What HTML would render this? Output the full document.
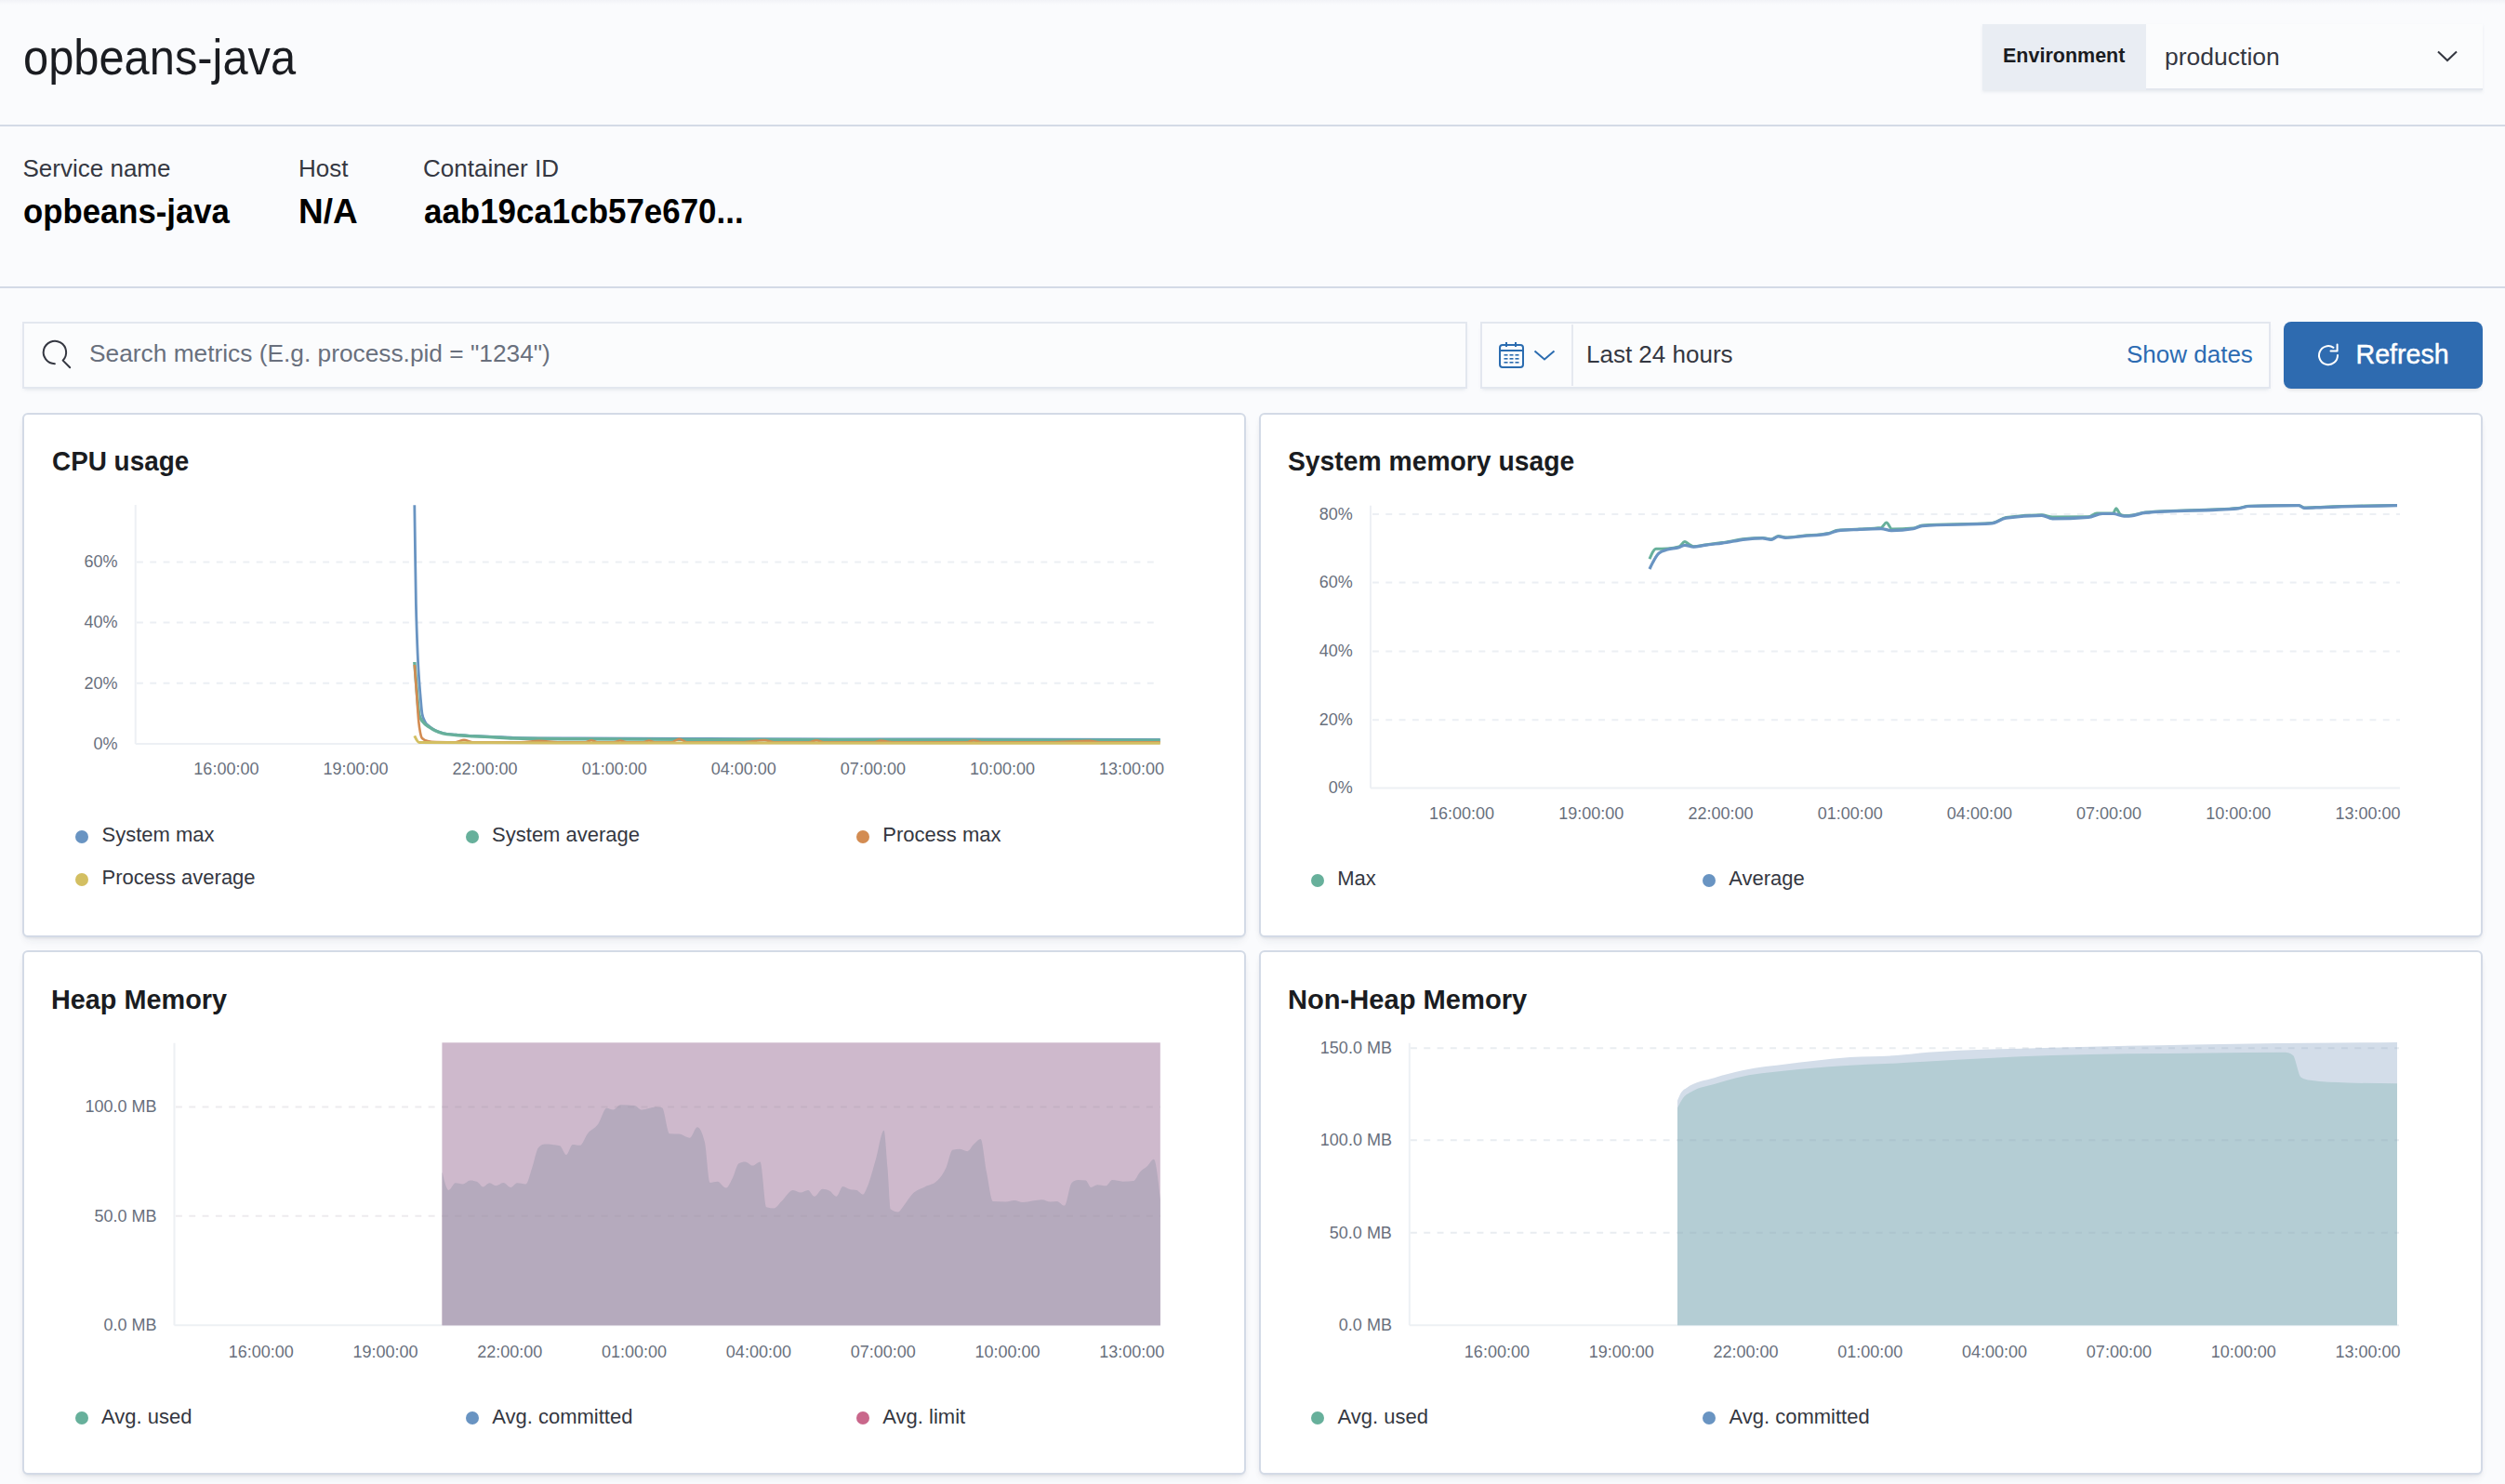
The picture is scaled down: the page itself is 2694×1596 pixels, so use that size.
<!DOCTYPE html>
<html><head><meta charset="utf-8"><title>opbeans-java</title>
<style>
html,body{margin:0;padding:0;}
body{width:2694px;height:1596px;position:relative;overflow:hidden;background:#FAFBFD;font-family:"Liberation Sans",sans-serif;color:#343741;}
.t{position:absolute;white-space:nowrap;line-height:1;}
svg{position:absolute;left:0;top:0;}
svg text{font-family:"Liberation Sans",sans-serif;}
</style></head>
<body>
<div style="position:absolute;left:0px;top:0px;width:2694px;height:134px;background:linear-gradient(#F2F3F7,#FAFBFD 5px);"></div>
<div style="position:absolute;left:0px;top:134px;width:2694px;height:2px;background:#D3DAE6;"></div>
<div style="position:absolute;left:0px;top:308px;width:2694px;height:2px;background:#D3DAE6;"></div>
<div class="t" style="left:25.00px;top:34.39px;font-size:54px;font-weight:400;color:#1A1C21;transform:scaleX(0.9040);transform-origin:0 0;">opbeans-java</div>
<div style="position:absolute;left:2132px;top:26px;width:538px;height:71px;background:#FBFCFD;box-shadow:0 2px 3px rgba(152,162,179,0.18);"></div>
<div style="position:absolute;left:2132px;top:26px;width:176px;height:71px;background:#E9EDF3;"></div>
<div style="position:absolute;left:2308px;top:95px;width:362px;height:2px;background:#E3E7EE;"></div>
<div class="t" style="left:2154.00px;top:50.30px;font-size:21.5px;font-weight:700;color:#1A1C21;">Environment</div>
<div class="t" style="left:2328.00px;top:48.07px;font-size:26.5px;font-weight:400;color:#343741;">production</div>
<div class="t" style="left:24.50px;top:168.19px;font-size:26px;font-weight:400;color:#343741;">Service name</div>
<div class="t" style="left:321.00px;top:168.19px;font-size:26px;font-weight:400;color:#343741;">Host</div>
<div class="t" style="left:455.00px;top:168.19px;font-size:26px;font-weight:400;color:#343741;">Container ID</div>
<div class="t" style="left:24.50px;top:208.76px;font-size:37.5px;font-weight:700;color:#000000;transform:scaleX(0.9260);transform-origin:0 0;">opbeans-java</div>
<div class="t" style="left:320.50px;top:208.76px;font-size:37.5px;font-weight:700;color:#000000;transform:scaleX(0.9850);transform-origin:0 0;">N/A</div>
<div class="t" style="left:455.50px;top:208.76px;font-size:37.5px;font-weight:700;color:#000000;transform:scaleX(0.9310);transform-origin:0 0;">aab19ca1cb57e670...</div>
<div style="position:absolute;left:24px;top:346px;width:1554px;height:72px;background:#FBFCFD;border:2px solid #E3E7EF;box-sizing:border-box;box-shadow:0 3px 4px -2px rgba(152,162,179,0.25);"></div>
<div class="t" style="left:96.00px;top:367.34px;font-size:26.3px;font-weight:400;color:#69707D;">Search metrics (E.g. process.pid = "1234")</div>
<div style="position:absolute;left:1592px;top:346px;width:850px;height:72px;background:#FBFCFD;border:2px solid #E3E7EF;box-sizing:border-box;box-shadow:0 3px 4px -2px rgba(152,162,179,0.25);"></div>
<div style="position:absolute;left:1690px;top:349px;width:2px;height:66px;background:#E6E9F0;"></div>
<div class="t" style="left:1706.00px;top:367.69px;font-size:26px;font-weight:400;color:#343741;">Last 24 hours</div>
<div class="t" style="left:2287.00px;top:367.59px;font-size:26px;font-weight:400;color:#2C6BB2;">Show dates</div>
<div style="position:absolute;left:2456px;top:346px;width:214px;height:72px;background:#2E6BB0;border-radius:8px;box-shadow:0 3px 4px -2px rgba(0,0,0,0.15);"></div>
<div class="t" style="left:2533.50px;top:366.79px;font-size:28.6px;font-weight:400;color:#FFFFFF;-webkit-text-stroke:0.45px #FFFFFF;">Refresh</div>
<div style="position:absolute;left:24px;top:444px;width:1316px;height:564px;background:#FFFFFF;border:2px solid #D3DAE6;box-sizing:border-box;border-radius:6px;box-shadow:0 2px 3px -1px rgba(60,66,90,0.10),0 4px 8px -2px rgba(60,66,90,0.06),0 8px 14px -4px rgba(60,66,90,0.04);"></div>
<div style="position:absolute;left:1354px;top:444px;width:1316px;height:564px;background:#FFFFFF;border:2px solid #D3DAE6;box-sizing:border-box;border-radius:6px;box-shadow:0 2px 3px -1px rgba(60,66,90,0.10),0 4px 8px -2px rgba(60,66,90,0.06),0 8px 14px -4px rgba(60,66,90,0.04);"></div>
<div style="position:absolute;left:24px;top:1022px;width:1316px;height:564px;background:#FFFFFF;border:2px solid #D3DAE6;box-sizing:border-box;border-radius:6px;box-shadow:0 2px 3px -1px rgba(60,66,90,0.10),0 4px 8px -2px rgba(60,66,90,0.06),0 8px 14px -4px rgba(60,66,90,0.04);"></div>
<div style="position:absolute;left:1354px;top:1022px;width:1316px;height:564px;background:#FFFFFF;border:2px solid #D3DAE6;box-sizing:border-box;border-radius:6px;box-shadow:0 2px 3px -1px rgba(60,66,90,0.10),0 4px 8px -2px rgba(60,66,90,0.06),0 8px 14px -4px rgba(60,66,90,0.04);"></div>
<div class="t" style="left:55.50px;top:480.73px;font-size:29.5px;font-weight:700;color:#1A1C21;transform:scaleX(0.9450);transform-origin:0 0;">CPU usage</div>
<div class="t" style="left:1384.50px;top:480.73px;font-size:29.5px;font-weight:700;color:#1A1C21;transform:scaleX(0.9590);transform-origin:0 0;">System memory usage</div>
<div class="t" style="left:55.00px;top:1060.03px;font-size:29.5px;font-weight:700;color:#1A1C21;transform:scaleX(0.9770);transform-origin:0 0;">Heap Memory</div>
<div class="t" style="left:1384.50px;top:1060.03px;font-size:29.5px;font-weight:700;color:#1A1C21;transform:scaleX(0.9870);transform-origin:0 0;">Non-Heap Memory</div>
<div style="position:absolute;left:81px;top:893px;width:14px;height:14px;border-radius:50%;background:#6994C2;"></div>
<div class="t" style="left:109.50px;top:887.38px;font-size:22px;font-weight:400;color:#343741;">System max</div>
<div style="position:absolute;left:500.6px;top:893px;width:14px;height:14px;border-radius:50%;background:#67B09B;"></div>
<div class="t" style="left:529.10px;top:887.38px;font-size:22px;font-weight:400;color:#343741;">System average</div>
<div style="position:absolute;left:920.8px;top:893px;width:14px;height:14px;border-radius:50%;background:#D38C52;"></div>
<div class="t" style="left:949.30px;top:887.38px;font-size:22px;font-weight:400;color:#343741;">Process max</div>
<div style="position:absolute;left:81px;top:939px;width:14px;height:14px;border-radius:50%;background:#D3BF62;"></div>
<div class="t" style="left:109.50px;top:933.38px;font-size:22px;font-weight:400;color:#343741;">Process average</div>
<div style="position:absolute;left:1409.8px;top:939.8px;width:14px;height:14px;border-radius:50%;background:#67B09B;"></div>
<div class="t" style="left:1438.30px;top:934.18px;font-size:22px;font-weight:400;color:#343741;">Max</div>
<div style="position:absolute;left:1830.7px;top:939.8px;width:14px;height:14px;border-radius:50%;background:#6994C2;"></div>
<div class="t" style="left:1859.20px;top:934.18px;font-size:22px;font-weight:400;color:#343741;">Average</div>
<div style="position:absolute;left:80.6px;top:1518.4px;width:14px;height:14px;border-radius:50%;background:#67B09B;"></div>
<div class="t" style="left:109.10px;top:1512.78px;font-size:22px;font-weight:400;color:#343741;">Avg. used</div>
<div style="position:absolute;left:500.7px;top:1518.4px;width:14px;height:14px;border-radius:50%;background:#6994C2;"></div>
<div class="t" style="left:529.20px;top:1512.78px;font-size:22px;font-weight:400;color:#343741;">Avg. committed</div>
<div style="position:absolute;left:920.8px;top:1518.4px;width:14px;height:14px;border-radius:50%;background:#C9678B;"></div>
<div class="t" style="left:949.30px;top:1512.78px;font-size:22px;font-weight:400;color:#343741;">Avg. limit</div>
<div style="position:absolute;left:1410px;top:1518.4px;width:14px;height:14px;border-radius:50%;background:#67B09B;"></div>
<div class="t" style="left:1438.50px;top:1512.78px;font-size:22px;font-weight:400;color:#343741;">Avg. used</div>
<div style="position:absolute;left:1831px;top:1518.4px;width:14px;height:14px;border-radius:50%;background:#6994C2;"></div>
<div class="t" style="left:1859.50px;top:1512.78px;font-size:22px;font-weight:400;color:#343741;">Avg. committed</div>
<svg width="2694" height="1596" viewBox="0 0 2694 1596">
<line x1="145.7" y1="543" x2="145.7" y2="800" stroke="#EDF0F4" stroke-width="2"/>
<line x1="145.7" y1="800" x2="1248" y2="800" stroke="#EDF0F4" stroke-width="2"/>
<line x1="147" y1="604.4" x2="1248" y2="604.4" stroke="#ECEFF4" stroke-width="2" stroke-dasharray="6.9 7.4"/>
<text x="126.6" y="610.2" text-anchor="end" font-size="18" fill="#69707D">60%</text>
<line x1="147" y1="669.6" x2="1248" y2="669.6" stroke="#ECEFF4" stroke-width="2" stroke-dasharray="6.9 7.4"/>
<text x="126.6" y="675.4" text-anchor="end" font-size="18" fill="#69707D">40%</text>
<line x1="147" y1="734.8" x2="1248" y2="734.8" stroke="#ECEFF4" stroke-width="2" stroke-dasharray="6.9 7.4"/>
<text x="126.6" y="740.6" text-anchor="end" font-size="18" fill="#69707D">20%</text>
<text x="126.6" y="805.8" text-anchor="end" font-size="18" fill="#69707D">0%</text>
<text x="243.4" y="833.4" text-anchor="middle" font-size="18" fill="#69707D">16:00:00</text>
<text x="382.5" y="833.4" text-anchor="middle" font-size="18" fill="#69707D">19:00:00</text>
<text x="521.6" y="833.4" text-anchor="middle" font-size="18" fill="#69707D">22:00:00</text>
<text x="660.7" y="833.4" text-anchor="middle" font-size="18" fill="#69707D">01:00:00</text>
<text x="799.8" y="833.4" text-anchor="middle" font-size="18" fill="#69707D">04:00:00</text>
<text x="938.9" y="833.4" text-anchor="middle" font-size="18" fill="#69707D">07:00:00</text>
<text x="1078.0" y="833.4" text-anchor="middle" font-size="18" fill="#69707D">10:00:00</text>
<text x="1217.1" y="833.4" text-anchor="middle" font-size="18" fill="#69707D">13:00:00</text>
<path d="M445.8,543.2 C446.1,562.7 446.3,582.2 446.6,600.0 C446.9,617.8 447.1,636.9 447.4,650.0 C447.7,664.8 448.0,671.9 448.3,681.0 C448.9,698.3 449.4,709.5 450.0,720.0 C450.7,732.4 451.3,739.0 452.0,747.0 C452.7,755.0 453.3,764.0 454.0,767.7 C455.0,773.2 456.0,773.9 457.0,776.0 C458.5,779.2 460.0,779.6 461.5,781.0 C463.7,783.0 465.8,784.3 468.0,785.5 C470.9,787.1 473.7,787.8 476.6,788.5 C481.1,789.6 485.5,789.7 490.0,790.2 C495.0,790.7 500.0,791.0 505.0,791.3 C513.3,791.8 521.7,791.9 530.0,792.3 C537.3,792.6 544.7,793.1 552.0,793.3 C574.7,793.8 597.3,793.8 620.0,794.0 C680.0,794.4 740.0,794.4 800.0,794.6 C866.7,794.8 933.3,794.9 1000.0,795.0 C1082.6,795.1 1165.1,795.2 1247.7,795.3" fill="none" stroke="#6994C2" stroke-width="2.8" stroke-linejoin="round"/>
<path d="M445.8,712.0 C446.5,721.8 447.3,731.6 448.0,740.0 C449.0,751.5 450.0,766.2 451.0,769.6 C452.3,774.2 453.7,774.7 455.0,776.5 C457.2,779.5 459.3,780.4 461.5,781.9 C463.7,783.4 465.8,784.7 468.0,785.8 C470.9,787.2 473.7,788.1 476.6,788.8 C481.1,789.9 485.5,790.0 490.0,790.5 C495.0,791.0 500.0,791.3 505.0,791.6 C513.3,792.1 521.7,792.4 530.0,792.8 C537.3,793.2 544.7,793.8 552.0,794.0 C574.7,794.5 597.3,794.6 620.0,794.8 C680.0,795.3 740.0,795.3 800.0,795.5 C866.7,795.7 933.3,795.9 1000.0,796.0 C1082.6,796.2 1165.1,796.2 1247.7,796.3" fill="none" stroke="#67B09B" stroke-width="3.4" stroke-linejoin="round"/>
<path d="M445.8,715.0 C446.5,725.0 447.3,735.0 448.0,745.0 C448.7,755.0 449.5,767.9 450.2,775.3 C450.8,781.3 451.4,784.9 452.0,788.0 C452.7,791.4 453.3,793.3 454.0,794.0 C456.0,796.0 458.0,796.6 460.0,797.0 C463.0,797.7 466.0,797.9 469.0,798.0 C476.0,798.1 483.0,798.2 490.0,798.2 C493.0,798.2 496.0,795.8 499.0,795.8 C502.0,795.8 505.0,798.2 508.0,798.2 C525.3,798.2 542.7,798.2 560.0,798.2 C566.7,798.2 573.3,796.8 580.0,796.8 C586.7,796.8 593.3,798.2 600.0,798.2 C610.0,798.2 620.0,798.2 630.0,798.2 C632.0,798.2 634.0,796.3 636.0,796.3 C638.0,796.3 640.0,798.2 642.0,798.2 C648.0,798.2 654.0,798.2 660.0,798.2 C662.3,798.2 664.7,796.5 667.0,796.5 C669.3,796.5 671.7,798.2 674.0,798.2 C680.0,798.2 686.0,798.2 692.0,798.2 C694.0,798.2 696.0,796.5 698.0,796.5 C700.0,796.5 702.0,798.2 704.0,798.2 C710.0,798.2 716.0,798.2 722.0,798.2 C724.8,798.2 727.7,794.8 730.5,794.8 C733.3,794.8 736.2,798.2 739.0,798.2 C759.3,798.2 779.7,798.2 800.0,798.2 C807.3,798.2 814.7,796.0 822.0,796.0 C825.3,796.0 828.7,798.2 832.0,798.2 C844.7,798.2 857.3,798.2 870.0,798.2 C872.7,798.2 875.3,796.3 878.0,796.3 C880.7,796.3 883.3,798.2 886.0,798.2 C904.0,798.2 922.0,798.2 940.0,798.2 C942.3,798.2 944.7,796.6 947.0,796.6 C951.3,796.6 955.7,798.3 960.0,798.3 C986.7,798.3 1013.3,798.3 1040.0,798.3 C1042.3,798.3 1044.7,796.2 1047.0,796.2 C1050.0,796.2 1053.0,798.3 1056.0,798.3 C1067.3,798.3 1078.7,798.3 1090.0,798.3 C1103.3,798.3 1116.7,798.3 1130.0,798.3 C1144.0,798.3 1158.0,796.9 1172.0,796.9 C1175.3,796.9 1178.7,798.3 1182.0,798.3 C1203.9,798.3 1225.8,798.3 1247.7,798.3" fill="none" stroke="#D38C52" stroke-width="2.6" stroke-linejoin="round"/>
<path d="M445.8,791.3 C447.5,794.9 449.3,798.5 451.0,798.5 C500.7,798.8 550.3,799.0 600.0,799.0 C815.9,799.1 1031.8,799.2 1247.7,799.2" fill="none" stroke="#D3BF62" stroke-width="3" stroke-linejoin="round"/>
<line x1="1474" y1="543.8" x2="1474" y2="847.6" stroke="#EDF0F4" stroke-width="2"/>
<line x1="1474" y1="847.6" x2="2581" y2="847.6" stroke="#EDF0F4" stroke-width="2"/>
<line x1="1476" y1="553.1" x2="2581" y2="553.1" stroke="#ECEFF4" stroke-width="2" stroke-dasharray="6.9 7.4"/>
<text x="1454.8" y="558.9" text-anchor="end" font-size="18" fill="#69707D">80%</text>
<line x1="1476" y1="626.6" x2="2581" y2="626.6" stroke="#ECEFF4" stroke-width="2" stroke-dasharray="6.9 7.4"/>
<text x="1454.8" y="632.4" text-anchor="end" font-size="18" fill="#69707D">60%</text>
<line x1="1476" y1="700.4" x2="2581" y2="700.4" stroke="#ECEFF4" stroke-width="2" stroke-dasharray="6.9 7.4"/>
<text x="1454.8" y="706.2" text-anchor="end" font-size="18" fill="#69707D">40%</text>
<line x1="1476" y1="774.2" x2="2581" y2="774.2" stroke="#ECEFF4" stroke-width="2" stroke-dasharray="6.9 7.4"/>
<text x="1454.8" y="780.0" text-anchor="end" font-size="18" fill="#69707D">20%</text>
<text x="1454.8" y="853.4" text-anchor="end" font-size="18" fill="#69707D">0%</text>
<text x="1572.1" y="880.8" text-anchor="middle" font-size="18" fill="#69707D">16:00:00</text>
<text x="1711.3" y="880.8" text-anchor="middle" font-size="18" fill="#69707D">19:00:00</text>
<text x="1850.5" y="880.8" text-anchor="middle" font-size="18" fill="#69707D">22:00:00</text>
<text x="1989.7" y="880.8" text-anchor="middle" font-size="18" fill="#69707D">01:00:00</text>
<text x="2128.9" y="880.8" text-anchor="middle" font-size="18" fill="#69707D">04:00:00</text>
<text x="2268.1" y="880.8" text-anchor="middle" font-size="18" fill="#69707D">07:00:00</text>
<text x="2407.3" y="880.8" text-anchor="middle" font-size="18" fill="#69707D">10:00:00</text>
<text x="2546.5" y="880.8" text-anchor="middle" font-size="18" fill="#69707D">13:00:00</text>
<path d="M1774.0,601.2 C1776.3,595.8 1778.6,590.4 1780.9,590.3 C1785.0,590.1 1789.2,590.2 1793.3,590.0 C1797.4,589.8 1801.6,589.3 1805.7,588.0 C1807.8,587.3 1809.8,582.6 1811.9,582.6 C1813.3,582.6 1814.6,584.2 1816.0,585.0 C1817.7,586.0 1819.5,587.8 1821.2,587.8 C1825.3,587.8 1829.5,586.6 1833.6,586.0 C1839.8,585.1 1846.0,584.5 1852.2,583.6 C1860.5,582.4 1868.7,580.5 1877.0,579.6 C1883.2,579.0 1889.4,578.5 1895.6,578.5 C1898.7,578.5 1901.8,580.0 1904.9,580.0 C1907.5,580.0 1910.0,576.6 1912.6,576.6 C1915.2,576.6 1917.8,578.0 1920.4,578.0 C1926.6,578.0 1932.8,576.8 1939.0,576.2 C1948.3,575.3 1957.6,575.3 1966.9,573.4 C1970.0,572.8 1973.1,570.5 1976.2,570.2 C1984.1,569.4 1992.1,569.5 2000.0,569.0 C2007.7,568.6 2015.3,568.5 2023.0,567.5 C2024.9,567.2 2026.9,562.1 2028.8,562.1 C2030.7,562.1 2032.7,569.0 2034.6,569.0 C2042.3,569.0 2049.9,568.7 2057.6,568.0 C2060.8,567.7 2064.0,565.2 2067.2,565.0 C2092.1,563.3 2117.1,564.2 2142.0,562.5 C2147.1,562.2 2152.3,557.3 2157.4,556.6 C2170.2,554.7 2183.1,553.8 2195.9,553.8 C2199.7,553.8 2203.6,556.0 2207.4,556.0 C2220.2,556.0 2233.0,555.9 2245.8,555.8 C2248.9,555.8 2251.9,552.0 2255.0,552.0 C2260.9,552.0 2266.8,552.0 2272.7,552.0 C2273.7,552.0 2274.7,546.8 2275.7,546.8 C2277.1,546.8 2278.6,551.9 2280.0,553.0 C2281.4,554.1 2282.8,554.6 2284.2,554.6 C2286.8,554.6 2289.3,554.5 2291.9,554.2 C2297.0,553.7 2302.1,551.5 2307.2,551.0 C2340.5,547.9 2373.7,549.5 2407.0,546.4 C2410.9,546.0 2414.7,544.3 2418.6,544.2 C2436.5,543.7 2454.4,543.4 2472.3,543.4 C2474.2,543.4 2476.2,546.0 2478.1,546.0 C2485.1,546.0 2492.2,545.4 2499.2,545.2 C2525.5,544.3 2551.7,543.8 2578.0,543.4" fill="none" stroke="#67B09B" stroke-width="3" stroke-linejoin="round"/>
<path d="M1774.0,612.0 C1777.3,604.9 1780.7,597.9 1784.0,595.0 C1787.1,592.3 1790.2,592.0 1793.3,591.0 C1797.4,589.7 1801.6,590.2 1805.7,588.8 C1807.8,588.1 1809.8,586.3 1811.9,586.3 C1815.0,586.3 1818.1,588.2 1821.2,588.2 C1825.3,588.2 1829.5,586.9 1833.6,586.3 C1839.8,585.4 1846.0,584.9 1852.2,584.1 C1860.5,583.0 1868.7,581.0 1877.0,580.1 C1883.2,579.4 1889.4,578.9 1895.6,578.9 C1898.7,578.9 1901.8,580.4 1904.9,580.4 C1907.5,580.4 1910.0,577.0 1912.6,577.0 C1915.2,577.0 1917.8,578.3 1920.4,578.3 C1926.6,578.3 1932.8,577.3 1939.0,576.7 C1948.3,575.8 1957.6,575.8 1966.9,573.9 C1970.0,573.3 1973.1,571.2 1976.2,570.8 C1984.1,569.9 1992.1,569.8 2000.0,569.4 C2007.7,569.0 2015.3,568.6 2023.0,568.6 C2026.9,568.6 2030.7,570.6 2034.6,570.6 C2042.3,570.6 2049.9,569.9 2057.6,568.6 C2060.8,568.0 2064.0,565.8 2067.2,565.6 C2092.1,563.8 2117.1,564.7 2142.0,562.9 C2147.1,562.5 2152.3,557.8 2157.4,557.1 C2170.2,555.3 2183.1,554.4 2195.9,554.4 C2199.7,554.4 2203.6,557.9 2207.4,557.9 C2220.2,557.9 2233.0,557.4 2245.8,556.4 C2250.9,556.0 2256.0,552.5 2261.1,552.5 C2265.0,552.5 2268.8,552.5 2272.7,552.5 C2276.5,552.5 2280.4,555.2 2284.2,555.2 C2286.8,555.2 2289.3,555.1 2291.9,554.8 C2297.0,554.3 2302.1,551.9 2307.2,551.4 C2340.5,548.3 2373.7,549.9 2407.0,546.8 C2410.9,546.4 2414.7,544.6 2418.6,544.5 C2436.5,544.0 2454.4,543.7 2472.3,543.7 C2474.2,543.7 2476.2,546.4 2478.1,546.4 C2485.1,546.4 2492.2,545.8 2499.2,545.6 C2525.5,544.7 2551.7,544.2 2578.0,543.7" fill="none" stroke="#6994C2" stroke-width="3.2" stroke-linejoin="round"/>
<line x1="187.5" y1="1121.7" x2="187.5" y2="1425.3" stroke="#EDF0F4" stroke-width="2"/>
<line x1="187.5" y1="1425.3" x2="1248" y2="1425.3" stroke="#EDF0F4" stroke-width="2"/>
<rect x="475.4" y="1121.3" width="772.4" height="304" fill="#CEB9CC"/>
<path d="M475.6,1260.4 C477.9,1270.2 480.2,1279.9 482.5,1279.9 C484.9,1279.9 487.4,1272.3 489.8,1272.3 C492.5,1272.3 495.1,1273.5 497.8,1273.5 C500.5,1273.5 503.1,1269.6 505.8,1269.6 C508.1,1269.6 510.4,1270.0 512.7,1270.7 C515.0,1271.4 517.3,1276.4 519.6,1276.4 C521.9,1276.4 524.2,1272.3 526.5,1272.3 C528.8,1272.3 531.0,1275.3 533.3,1275.3 C536.0,1275.3 538.6,1271.9 541.3,1271.9 C544.0,1271.9 546.7,1276.9 549.4,1276.9 C551.7,1276.9 553.9,1272.3 556.2,1272.3 C559.3,1272.3 562.3,1273.5 565.4,1273.5 C567.7,1273.5 570.0,1262.4 572.3,1255.8 C574.6,1249.2 576.9,1236.3 579.2,1234.0 C581.5,1231.7 583.7,1230.6 586.0,1230.6 C591.3,1230.6 596.7,1231.1 602.0,1232.2 C604.3,1232.7 606.7,1242.0 609.0,1242.0 C611.3,1242.0 613.5,1231.0 615.8,1231.0 C618.5,1231.0 621.1,1231.8 623.8,1231.8 C626.5,1231.8 629.2,1222.7 631.9,1219.2 C635.7,1214.3 639.5,1214.3 643.3,1208.8 C646.4,1204.4 649.4,1191.7 652.5,1191.7 C654.8,1191.7 657.1,1193.5 659.4,1193.5 C662.1,1193.5 664.7,1188.2 667.4,1188.2 C672.4,1188.2 677.3,1188.4 682.3,1188.9 C685.0,1189.2 687.6,1193.5 690.3,1193.5 C695.3,1193.5 700.2,1190.5 705.2,1190.5 C707.5,1190.5 709.7,1190.7 712.0,1191.2 C714.7,1191.8 717.4,1219.0 720.1,1219.2 C723.5,1219.5 727.0,1219.3 730.4,1219.6 C734.2,1219.9 738.1,1223.7 741.9,1223.7 C744.6,1223.7 747.2,1212.3 749.9,1212.3 C752.6,1212.3 755.2,1217.6 757.9,1228.3 C759.8,1235.9 761.7,1271.9 763.6,1271.9 C766.3,1271.9 768.9,1270.7 771.6,1270.7 C774.7,1270.7 777.7,1277.6 780.8,1277.6 C783.1,1277.6 785.4,1271.7 787.7,1267.3 C790.0,1262.9 792.3,1252.4 794.6,1251.2 C796.9,1250.0 799.1,1249.4 801.4,1249.4 C804.1,1249.4 806.7,1253.5 809.4,1253.5 C812.1,1253.5 814.8,1249.4 817.5,1249.4 C819.8,1249.4 822.0,1297.5 824.3,1298.2 C827.0,1299.0 829.7,1299.4 832.4,1299.4 C835.1,1299.4 837.7,1294.5 840.4,1292.0 C844.6,1288.1 848.8,1279.9 853.0,1279.9 C855.7,1279.9 858.3,1282.6 861.0,1282.6 C863.7,1282.6 866.3,1279.9 869.0,1279.9 C871.3,1279.9 873.6,1286.8 875.9,1286.8 C878.8,1286.8 881.7,1278.7 884.6,1278.7 C887.3,1278.7 889.9,1279.5 892.6,1281.0 C894.9,1282.3 897.2,1286.8 899.5,1286.8 C901.8,1286.8 904.1,1276.0 906.4,1276.0 C909.1,1276.0 911.7,1278.7 914.4,1279.2 C916.7,1279.7 918.9,1279.4 921.2,1279.9 C923.5,1280.4 925.8,1284.5 928.1,1284.5 C929.6,1284.5 931.2,1279.9 932.7,1276.4 C935.8,1269.5 938.8,1257.1 941.9,1246.7 C944.8,1236.8 947.7,1215.7 950.6,1215.7 C951.9,1215.7 953.2,1240.4 954.5,1255.8 C955.6,1269.2 956.8,1299.7 957.9,1300.5 C960.6,1302.5 963.2,1303.5 965.9,1303.5 C967.8,1303.5 969.8,1299.3 971.7,1297.0 C975.1,1292.9 978.6,1286.7 982.0,1283.3 C986.2,1279.2 990.4,1278.6 994.6,1276.4 C999.2,1274.0 1003.7,1274.1 1008.3,1269.6 C1011.4,1266.6 1014.4,1262.6 1017.5,1255.8 C1019.8,1250.7 1022.1,1237.4 1024.4,1236.8 C1027.1,1236.1 1029.7,1235.7 1032.4,1235.7 C1035.1,1235.7 1037.7,1238.2 1040.4,1238.2 C1042.7,1238.2 1045.0,1232.8 1047.3,1230.6 C1049.7,1228.3 1052.2,1224.9 1054.6,1224.9 C1056.7,1224.9 1058.9,1249.6 1061.0,1260.4 C1063.3,1272.1 1065.6,1291.8 1067.9,1292.0 C1072.5,1292.3 1077.0,1292.5 1081.6,1292.5 C1084.7,1292.5 1087.7,1290.9 1090.8,1290.9 C1093.9,1290.9 1096.9,1292.9 1100.0,1292.9 C1106.9,1292.9 1113.7,1290.2 1120.6,1290.2 C1123.7,1290.2 1126.7,1292.5 1129.8,1292.5 C1132.1,1292.5 1134.3,1292.0 1136.6,1292.0 C1139.3,1292.0 1142.0,1296.6 1144.7,1296.6 C1147.4,1296.6 1150.0,1274.1 1152.7,1271.9 C1155.0,1270.0 1157.3,1269.1 1159.6,1269.1 C1162.3,1269.1 1164.9,1269.3 1167.6,1269.6 C1169.5,1269.8 1171.4,1276.9 1173.3,1276.9 C1175.6,1276.9 1177.9,1274.2 1180.2,1274.2 C1183.3,1274.2 1186.3,1275.3 1189.4,1275.3 C1191.7,1275.3 1193.9,1269.1 1196.2,1269.1 C1200.0,1269.1 1203.9,1270.7 1207.7,1270.7 C1211.5,1270.7 1215.3,1270.5 1219.1,1270.0 C1221.4,1269.7 1223.7,1263.0 1226.0,1260.4 C1228.7,1257.4 1231.3,1256.5 1234.0,1254.0 C1236.3,1251.8 1238.6,1246.7 1240.9,1246.7 C1242.8,1246.7 1244.7,1261.8 1246.6,1278.7 C1247.0,1282.3 1247.4,1286.2 1247.8,1290.2 L1247.8,1425.3 L475.6,1425.3 Z" fill="#B5AABD"/>
<line x1="189" y1="1190.4" x2="1248" y2="1190.4" stroke="#9A8FA0" stroke-opacity="0.18" stroke-width="2" stroke-dasharray="6.9 7.4"/>
<text x="168.6" y="1196.2" text-anchor="end" font-size="18" fill="#69707D">100.0 MB</text>
<line x1="189" y1="1307.7" x2="1248" y2="1307.7" stroke="#9A8FA0" stroke-opacity="0.18" stroke-width="2" stroke-dasharray="6.9 7.4"/>
<text x="168.6" y="1313.5" text-anchor="end" font-size="18" fill="#69707D">50.0 MB</text>
<text x="168.6" y="1431.1" text-anchor="end" font-size="18" fill="#69707D">0.0 MB</text>
<text x="280.7" y="1460" text-anchor="middle" font-size="18" fill="#69707D">16:00:00</text>
<text x="414.5" y="1460" text-anchor="middle" font-size="18" fill="#69707D">19:00:00</text>
<text x="548.3" y="1460" text-anchor="middle" font-size="18" fill="#69707D">22:00:00</text>
<text x="682.1" y="1460" text-anchor="middle" font-size="18" fill="#69707D">01:00:00</text>
<text x="815.9" y="1460" text-anchor="middle" font-size="18" fill="#69707D">04:00:00</text>
<text x="949.7" y="1460" text-anchor="middle" font-size="18" fill="#69707D">07:00:00</text>
<text x="1083.5" y="1460" text-anchor="middle" font-size="18" fill="#69707D">10:00:00</text>
<text x="1217.3" y="1460" text-anchor="middle" font-size="18" fill="#69707D">13:00:00</text>
<line x1="1515.8" y1="1121.7" x2="1515.8" y2="1425.3" stroke="#EDF0F4" stroke-width="2"/>
<line x1="1515.8" y1="1425.3" x2="2580" y2="1425.3" stroke="#EDF0F4" stroke-width="2"/>
<path d="M1804.0,1183.7 C1805.3,1180.4 1806.7,1177.2 1808.0,1175.0 C1810.0,1171.8 1811.9,1171.3 1813.9,1169.9 C1823.8,1162.8 1833.6,1162.3 1843.5,1159.2 C1854.0,1155.9 1864.5,1153.2 1875.0,1151.0 C1890.8,1147.6 1906.6,1146.2 1922.4,1144.2 C1931.6,1143.0 1940.8,1142.0 1950.0,1141.0 C1963.2,1139.6 1976.4,1138.1 1989.6,1137.1 C2006.4,1135.9 2023.2,1136.4 2040.0,1135.1 C2051.1,1134.3 2062.3,1132.6 2073.4,1131.8 C2117.9,1128.4 2162.5,1128.1 2207.0,1126.7 C2257.2,1125.2 2307.3,1124.3 2357.5,1123.4 C2431.0,1122.1 2504.5,1121.6 2578.0,1121.0 L2578,1425.3 L1804,1425.3 Z" fill="#D3DDE9"/>
<path d="M1804.0,1191.6 C1806.0,1187.7 1808.0,1183.7 1810.0,1181.0 C1813.3,1176.5 1816.5,1175.8 1819.8,1173.8 C1827.7,1168.9 1835.6,1168.4 1843.5,1166.0 C1851.4,1163.6 1859.3,1161.1 1867.2,1159.2 C1885.6,1154.7 1904.0,1153.4 1922.4,1151.3 C1942.2,1149.0 1961.9,1147.5 1981.7,1146.2 C2001.1,1144.9 2020.6,1144.4 2040.0,1143.4 C2050.0,1142.9 2060.0,1142.3 2070.0,1141.8 C2115.7,1139.4 2161.3,1136.6 2207.0,1135.1 C2262.7,1133.3 2318.5,1133.0 2374.2,1132.4 C2402.1,1132.1 2429.9,1131.8 2457.8,1131.8 C2460.5,1131.8 2463.3,1132.9 2466.0,1135.1 C2468.8,1137.4 2471.7,1156.6 2474.5,1158.5 C2477.8,1160.7 2481.2,1161.4 2484.5,1161.8 C2497.9,1163.6 2511.2,1164.1 2524.6,1164.5 C2542.4,1165.0 2560.2,1165.1 2578.0,1165.2 L2578,1425.3 L1804,1425.3 Z" fill="#B4CDD4"/>
<line x1="1517" y1="1127.3" x2="2580" y2="1127.3" stroke="#8FA3B8" stroke-opacity="0.2" stroke-width="2" stroke-dasharray="6.9 7.4"/>
<text x="1496.9" y="1133.1" text-anchor="end" font-size="18" fill="#69707D">150.0 MB</text>
<line x1="1517" y1="1226.3" x2="2580" y2="1226.3" stroke="#8FA3B8" stroke-opacity="0.2" stroke-width="2" stroke-dasharray="6.9 7.4"/>
<text x="1496.9" y="1232.1" text-anchor="end" font-size="18" fill="#69707D">100.0 MB</text>
<line x1="1517" y1="1325.8" x2="2580" y2="1325.8" stroke="#8FA3B8" stroke-opacity="0.2" stroke-width="2" stroke-dasharray="6.9 7.4"/>
<text x="1496.9" y="1331.6" text-anchor="end" font-size="18" fill="#69707D">50.0 MB</text>
<text x="1496.9" y="1431.1" text-anchor="end" font-size="18" fill="#69707D">0.0 MB</text>
<text x="1609.9" y="1460" text-anchor="middle" font-size="18" fill="#69707D">16:00:00</text>
<text x="1743.7" y="1460" text-anchor="middle" font-size="18" fill="#69707D">19:00:00</text>
<text x="1877.5" y="1460" text-anchor="middle" font-size="18" fill="#69707D">22:00:00</text>
<text x="2011.3" y="1460" text-anchor="middle" font-size="18" fill="#69707D">01:00:00</text>
<text x="2145.1" y="1460" text-anchor="middle" font-size="18" fill="#69707D">04:00:00</text>
<text x="2278.9" y="1460" text-anchor="middle" font-size="18" fill="#69707D">07:00:00</text>
<text x="2412.7" y="1460" text-anchor="middle" font-size="18" fill="#69707D">10:00:00</text>
<text x="2546.5" y="1460" text-anchor="middle" font-size="18" fill="#69707D">13:00:00</text>
<path d="M58.9,391.2 A12.2,12.2 0 1 1 67.6,387.6 L75.2,395.3" fill="none" stroke="#343741" stroke-width="2" stroke-linecap="round" stroke-linejoin="round"/>
<rect x="1613" y="371" width="25" height="24" rx="3" fill="none" stroke="#2B6CB0" stroke-width="2"/>
<line x1="1613" y1="377" x2="1638" y2="377" stroke="#2B6CB0" stroke-width="2"/>
<line x1="1620" y1="368" x2="1620" y2="373" stroke="#2B6CB0" stroke-width="2"/>
<line x1="1630" y1="368" x2="1630" y2="373" stroke="#2B6CB0" stroke-width="2"/>
<rect x="1617.5" y="381" width="4" height="1.6" fill="#2B6CB0"/>
<rect x="1623.5" y="381" width="4" height="1.6" fill="#2B6CB0"/>
<rect x="1629.5" y="381" width="4" height="1.6" fill="#2B6CB0"/>
<rect x="1617.5" y="385" width="4" height="1.6" fill="#2B6CB0"/>
<rect x="1623.5" y="385" width="4" height="1.6" fill="#2B6CB0"/>
<rect x="1629.5" y="385" width="4" height="1.6" fill="#2B6CB0"/>
<rect x="1617.5" y="389" width="4" height="1.6" fill="#2B6CB0"/>
<rect x="1623.5" y="389" width="4" height="1.6" fill="#2B6CB0"/>
<rect x="1629.5" y="389" width="4" height="1.6" fill="#2B6CB0"/>
<path d="M1650.5,377.5 L1661,386.5 L1671.5,377.5" fill="none" stroke="#2B6CB0" stroke-width="2"/>
<path d="M2622,55.5 L2632,65 L2642,55.5" fill="none" stroke="#343741" stroke-width="2"/>
<path d="M2509.5,373.8 A10,10 0 1 0 2514,382" fill="none" stroke="#FFFFFF" stroke-width="2" stroke-linecap="round"/>
<path d="M2513.6,370.5 L2513.6,377.5 L2506.5,377.5" fill="none" stroke="#FFFFFF" stroke-width="2" stroke-linecap="round" stroke-linejoin="round"/>
</svg>
</body></html>
